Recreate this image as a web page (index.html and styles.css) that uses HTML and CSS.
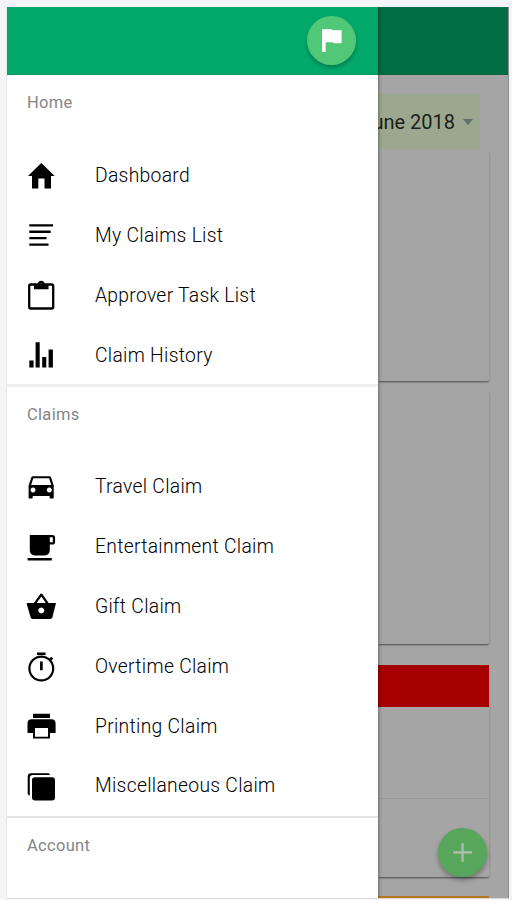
FILE: index.html
```
<!DOCTYPE html>
<html lang="en">
<head>
<meta charset="utf-8">
<title>Claims</title>
<link rel="stylesheet" href="styles.css">
</head>
<body>
<div class="screen">
  <aside class="drawer">
    <header class="drawer-bar">
      <button class="round flag" aria-label="Flag"><svg viewBox="0 0 49 49"><path d="M15 13.300h10l.6.9h9V27.200h-7.500l-1.500-.9H18.700v9.700H15z" fill="#fff"/></svg></button>
    </header>
    <nav>
      <section class="group">
        <h2>Home</h2>
        <ul>
          <li><svg viewBox="0 0 32 32"><path d="M16.300 4 29.700 17H26v12.500h-6.500v-10h-6.200v10H7V17H3z"/></svg><span>Dashboard</span></li>
          <li><svg viewBox="0 0 32 32"><path d="M4.300 5.200h23.700v2.400H4.300zM4.300 11.600h21.400V14H4.300zM4.300 18h17.200v2.300H4.300zM4.300 24.500h19.200v2.300H4.300z"/></svg><span>My Claims List</span></li>
          <li><svg viewBox="0 0 32 32"><rect x="4.200" y="5.500" width="24" height="24" rx="1.500" fill="none" stroke="#000" stroke-width="2.300"/><path fill-rule="evenodd" d="M9 5h3.500c.6-2.200 2-3.200 3.700-3.200S19.400 2.800 20 5h3.500v5.200H9zM16.200 4a1.200 1.200 0 1 0 .01 0z"/></svg><span>Approver Task List</span></li>
          <li><svg viewBox="0 0 32 32"><path d="M4.300 21.500h4.300v7H4.300zM10.600 3.200h4.100v25.300h-4.100zM17.200 18h4.100v10.500h-4.100zM23.600 10.500h4.300v18h-4.300z"/></svg><span>Claim History</span></li>
        </ul>
      </section>
      <section class="group claims">
        <h2>Claims</h2>
        <ul>
          <li><svg viewBox="0 0 32 32"><path fill-rule="evenodd" d="M8.300 5.300h16c1 0 1.500.4 1.800 1.300l2.600 8v11.800c0 .7-.4 1.100-1.100 1.100h-1.900c-.7 0-1.100-.4-1.100-1.100V25H7.700v1.400c0 .7-.4 1.100-1.100 1.100H4.700c-.7 0-1.100-.4-1.100-1.100V14.600l2.700-8c.3-.9 1-1.300 2-1.300zM8.300 7.300 6.100 14h20.200l-2.200-6.700zM8 16.500a2.500 2.500 0 1 0 .01 0zM24.300 16.500a2.500 2.500 0 1 0 .01 0z"/></svg><span>Travel Claim</span></li>
          <li><svg viewBox="0 0 32 32"><path fill-rule="evenodd" d="M4.800 4h22.700c1.600 0 2.600 1 2.600 2.600v4.300c0 1.600-1 2.600-2.600 2.600h-2.700v5.600c0 3.200-2 5.400-5.200 5.400h-9.700c-3.200 0-5.100-2.200-5.100-5.400zM24.800 6.300v4.900h3V6.300zM2.600 27h24.200v2.500H2.600z"/></svg><span>Entertainment Claim</span></li>
          <li><svg viewBox="0 0 32 32"><path fill-rule="evenodd" d="M2 13h6.900l6.400-9.100c.5-.7 1.500-.7 2 0l6.400 9.100H31l-3.600 14.200c-.3 1.100-1 1.700-2.200 1.700H7.800c-1.200 0-1.900-.6-2.200-1.700L1.700 14zM16.300 6.400 11.700 13h9.200zM16.300 17.500a3 3 0 1 0 .01 0z"/></svg><span>Gift Claim</span></li>
          <li><svg viewBox="0 0 32 32"><path d="M12 2.400h8.600V5H12zM15 11.500h2.700v8.800H15z"/><circle cx="16.300" cy="18.500" r="11.900" fill="none" stroke="#000" stroke-width="2.200"/><path d="m24 9 2.300-2.300 1.900 1.900-2.200 2.300z"/></svg><span>Overtime Claim</span></li>
          <li><svg viewBox="0 0 32 32"><path fill-rule="evenodd" d="M8 3.800h17V8H8zM6.400 9.300h20.200c2.400 0 4 1.600 4 4v9.800H25v5.500H8v-5.500H2.500v-9.800c0-2.400 1.500-4 3.900-4zM10 18v8.700h13V18z"/></svg><span>Printing Claim</span></li>
          <li><svg viewBox="0 0 32 32"><path d="M6 3.200h16.800c1.300 0 2 .6 2.300 1.900H7.800C6 5.100 4.800 6.300 4.800 8v17.500c-1.300-.2-2.100-1-2.100-2.300V6.400c0-2 1.300-3.200 3.300-3.200z"/><rect x="7" y="7.200" width="23" height="23.400" rx="3"/></svg><span>Miscellaneous Claim</span></li>
        </ul>
      </section>
      <section class="group account"><h2>Account</h2></section>
    </nav>
  </aside>
  <main class="content">
    <div class="app-bar"></div>
    <div class="period"><span>June 2018</span><i class="caret"></i></div>
    <div class="card first"></div>
    <div class="card second"></div>
    <div class="card third"><div class="red"></div><div class="line"></div></div>
    <div class="orange"></div>
    <button class="round add" aria-label="Add"><svg viewBox="0 0 49 49"><path d="M23.500 15h2.200v8.300H34v2.200h-8.300v8.300h-2.200v-8.300h-8.300v-2.200h8.300z" fill="#b0beb0"/></svg></button>
  </main>
</div>
</body>
</html>
```
FILE: styles.css
```
* { box-sizing: border-box; }
body {
  margin: 0;
  height: 900px;
  overflow: hidden;
  padding: 7px 3px 1px 7px;
  background: #f5f5f7;
  font-family: Roboto, "Liberation Sans", sans-serif;
}
.screen {
  display: flex;
  height: 892px;
  overflow: hidden;
  border-bottom: 1px solid #dcdcdc;
  box-shadow: -1px 0 0 #ebebeb;
}
.drawer {
  width: 371px;
  flex: none;
  background: #fff;
  position: relative;
  z-index: 1;
  box-shadow: 0 0 4px rgba(0, 0, 0, .55);
}
.drawer-bar {
  height: 68px;
  display: flex;
  justify-content: flex-end;
  align-items: center;
  padding-right: 22px;
  background: #03a96b;
  border-bottom: 1px solid #079860;
}
.round {
  width: 49px;
  height: 49px;
  padding: 0;
  border: 0;
  border-radius: 50%;
}
.round svg { display: block; width: 49px; height: 49px; }
.flag { background: #50c878; box-shadow: 0 3px 4px rgba(0, 0, 0, .25); }
.group h2 {
  margin: 0;
  height: 70px;
  padding: 16px 0 0 20px;
  font-size: 16.500px;
  line-height: 23px;
  font-weight: 400;
  letter-spacing: .3px;
  color: #858585;
}
.group ul { list-style: none; margin: 0; padding: 0; }
.group li {
  height: 60px;
  display: flex;
  align-items: center;
  padding-left: 18px;
  gap: 38px;
  font-size: 19.300px;
  font-weight: 300;
  letter-spacing: .3px;
  color: #000;
  white-space: nowrap;
}
.group li svg { width: 32px; height: 32px; flex: none; }
.claims { border-top: 3px solid #eee; margin-top: -1px; }
.claims li { height: 59.800px; }
.account { border-top: 2px solid #e4e4e4; }
.content {
  flex: 1;
  position: relative;
  display: flex;
  flex-direction: column;
  min-width: 0;
  padding-right: 18px;
  overflow: hidden;
  background: #a5a5a5;
  border-right: 1px solid #8d8d8d;
}
.app-bar {
  height: 68px;
  flex: none;
  margin-right: -18px;
  background: #006d45;
  border-bottom: 1px solid #12603f;
}
.period {
  flex: none;
  height: 55px;
  margin: 19px 10px 0 0;
  display: flex;
  align-items: center;
  justify-content: flex-end;
  gap: 8px;
  padding-right: 7px;
  border-radius: 3px;
  background: #9ba88f;
  font-size: 20px;
  white-space: nowrap;
  color: #1c1e19;
}
.caret {
  border: 5.500px solid transparent;
  border-top: 6px solid #5f7068;
  border-bottom: 0;
}
.card {
  flex: none;
  border-radius: 0 3px 3px 0;
  border-right: 1px solid #999;
  box-shadow: 0 2px 2px -1px rgba(0, 0, 0, .55);
}
.first { height: 229px; margin-top: 3px; }
.second { height: 252px; margin-top: 11px; }
.third { height: 212px; margin-top: 21px; }
.red { height: 42px; background: #a60000; }
.line { height: 92px; border-bottom: 1px solid #999; }
.orange { flex: none; height: 8px; margin: 19px 1px 0 0; background: #b57719; }
.add {
  position: absolute;
  right: 21px;
  bottom: 21px;
  background: #58a55c;
  box-shadow: 0 3px 5px rgba(0, 0, 0, .3);
}
```
